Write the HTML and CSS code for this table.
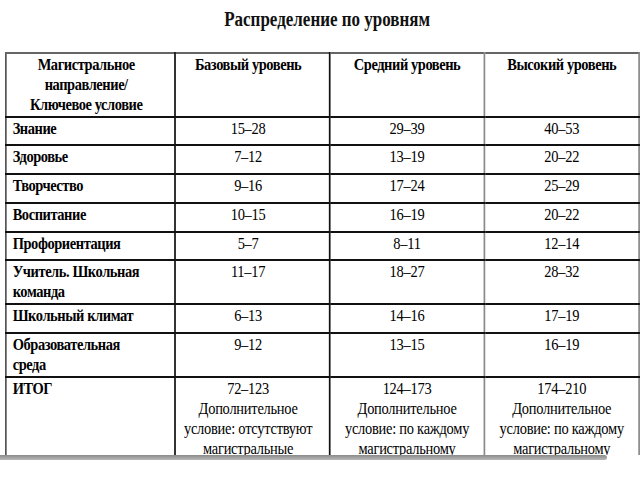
FILE: index.html
```html
<!DOCTYPE html>
<html>
<head>
<meta charset="utf-8">
<link rel="stylesheet" href="styles.css">
</head>
<body>
<div class="clip">
  <div class="sheet">
    <h1 class="title">Распределение по уровням</h1>
    <table class="grid">
      <colgroup><col class="w1"><col class="w2"><col class="w2"><col class="w2"></colgroup>
      <tr class="r-head">
        <th class="c1 head-c1">Магистральное<br>направление/<br>Ключевое условие</th>
        <th class="c2">Базовый уровень</th>
        <th class="c3">Средний уровень</th>
        <th class="c4">Высокий уровень</th>
      </tr>
      <tr class="r28"><td class="c1">Знание</td><td class="c2">15–28</td><td class="c3">29–39</td><td class="c4">40–53</td></tr>
      <tr class="r29"><td class="c1">Здоровье</td><td class="c2">7–12</td><td class="c3">13–19</td><td class="c4">20–22</td></tr>
      <tr class="r29"><td class="c1">Творчество</td><td class="c2">9–16</td><td class="c3">17–24</td><td class="c4">25–29</td></tr>
      <tr class="r29"><td class="c1">Воспитание</td><td class="c2">10–15</td><td class="c3">16–19</td><td class="c4">20–22</td></tr>
      <tr class="r28"><td class="c1">Профориентация</td><td class="c2">5–7</td><td class="c3">8–11</td><td class="c4">12–14</td></tr>
      <tr class="r44"><td class="c1">Учитель. Школьная<br>команда</td><td class="c2">11–17</td><td class="c3">18–27</td><td class="c4">28–32</td></tr>
      <tr class="r29"><td class="c1">Школьный климат</td><td class="c2">6–13</td><td class="c3">14–16</td><td class="c4">17–19</td></tr>
      <tr class="r44"><td class="c1">Образовательная<br>среда</td><td class="c2">9–12</td><td class="c3">13–15</td><td class="c4">16–19</td></tr>
      <tr class="r-total">
        <td class="c1">ИТОГ</td>
        <td class="c2">72–123<br>Дополнительное<br>условие: отсутствуют<br>магистральные</td>
        <td class="c3">124–173<br>Дополнительное<br>условие: по каждому<br>магистральному</td>
        <td class="c4">174–210<br>Дополнительное<br>условие: по каждому<br>магистральному</td>
      </tr>
    </table>
  </div>
</div>
<div class="bar"></div>
</body>
</html>
```
FILE: styles.css
```css
html, body {
  margin: 0;
  padding: 0;
  background: #ffffff;
}
body {
  width: 640px;
  height: 480px;
  overflow: hidden;
  font-family: "Liberation Serif", serif;
  color: #000;
}
.clip {
  height: 455px;
  overflow: hidden;
}
.sheet {
  width: 746px;
  margin-left: 5px;
  transform: scaleX(0.85);
  transform-origin: 0 0;
}
.title {
  margin: 0;
  padding: 7px 0 0 12px;
  height: 52px;
  box-sizing: border-box;
  font-family: "Liberation Serif", serif;
  font-size: 20px;
  line-height: 24px;
  font-weight: bold;
  text-align: center;
  color: #111;
}
.grid {
  width: 746px;
  border-collapse: collapse;
  table-layout: fixed;
  font-family: "Liberation Serif", serif;
  font-size: 17px;
  line-height: 20px;
}
.w1 { width: 199px; }
.w2 { width: 182px; }
.grid th, .grid td {
  border: 2px solid #111;
  padding: 1px 3px 0 3px;
  vertical-align: top;
  font-weight: normal;
  text-align: center;
  letter-spacing: -0.3px;
}
.grid .c1 {
  text-align: left;
  font-weight: bold;
  letter-spacing: -0.5px;
  padding-left: 7px;
  border-left-color: #555;
}
.grid th {
  font-weight: bold;
  letter-spacing: -0.5px;
}
.grid .head-c1 {
  text-align: center;
  padding-left: 0;
  padding-right: 10px;
}
.grid .c2 {
  padding-left: 0;
  padding-right: 10px;
}
.grid .c3 {
  border-right-color: #8a8a8a;
}
.grid .c4 {
  border-right-color: #8a8a8a;
}
.r-head th {
  border-top-color: #666;
}
.r-head { height: 64px; }
.r28 { height: 28px; }
.r29 { height: 29px; }
.r44 { height: 44px; }
.r-total { height: 120px; }
.bar {
  width: 607px;
  height: 5px;
  background: linear-gradient(#8a8a8a, #b8b8b8);
  border-radius: 0 3px 3px 0;
}
```
